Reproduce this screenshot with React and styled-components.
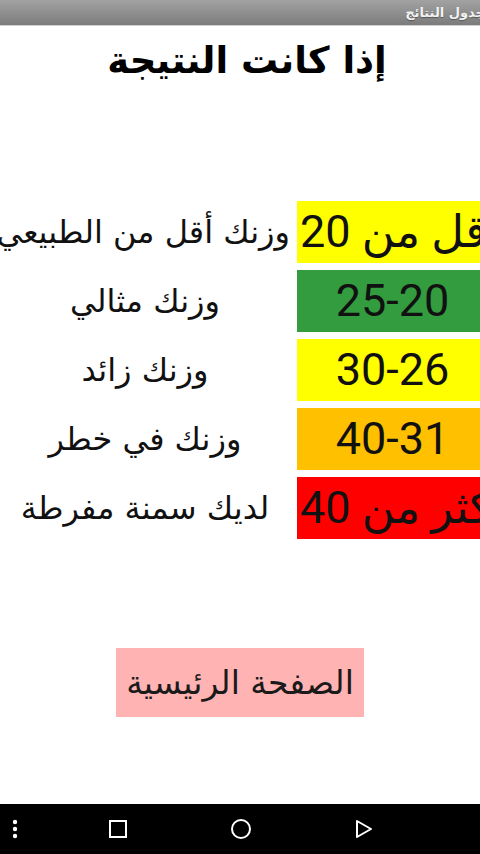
import React from 'react';
import styled, { createGlobalStyle } from 'styled-components';

const GlobalStyle = createGlobalStyle`
  html, body { margin: 0; padding: 0; background: #fff; overflow: hidden; }
  * { box-sizing: border-box; }
`;

const Screen = styled.div`
  width: 480px; height: 854px; display: flex; flex-direction: column;
  background: #fff; overflow: hidden;
  font-family: "DejaVu Sans", "Noto Sans", sans-serif; color: #111;
`;

const TitleBar = styled.div`
  height: 26px; flex-shrink: 0; display: flex; justify-content: flex-end; align-items: center;
  background: linear-gradient(#a2a2a2, #7c7c7c);
  border-bottom: 1px solid #cfcfcf; overflow: hidden;
`;
const TitleText = styled.span`
  direction: rtl; white-space: nowrap; margin-right: -5px;
  font-size: 13px; font-weight: bold; color: #f2f2f2;
  text-shadow: 0 1px 1px rgba(0,0,0,0.35);
`;

const Content = styled.main`
  flex: 1; display: flex; flex-direction: column; align-items: center;
`;

const Heading = styled.h1`
  margin: 10px 0 0 14px; direction: rtl;
  font-size: 37px; font-weight: bold; line-height: 50px; color: #000;
`;

const Table = styled.div`
  margin-top: 115px; width: 480px; display: flex; flex-direction: column; gap: 7px;
`;

const Row = styled.div`
  display: flex; direction: ltr; align-items: center; height: 62px;
`;

const Label = styled.div`
  width: 290px; flex-shrink: 0; direction: rtl; text-align: center; white-space: nowrap;
  font-size: 32px; line-height: 62px;
`;

const Range = styled.div`
  width: 188px; height: 62px; margin-left: 7px; flex-shrink: 0; overflow: hidden;
  direction: ltr; text-align: center; white-space: nowrap; padding-left: 3px;
  background: ${p => p.bg};
`;
const RangeText = styled.span`
  display: inline-block; direction: rtl; unicode-bidi: isolate;
  font-family: Roboto, "DejaVu Sans", sans-serif; font-size: 45px; line-height: 62px; color: #111;
`;

const HomeButton = styled.button`
  margin-top: 109px; width: 248px; height: 69px; border: none; border-radius: 0;
  background: #ffb3b3; direction: rtl; cursor: pointer;
  font-family: "DejaVu Sans", "Noto Sans", sans-serif; font-size: 33px; color: #1a1a1a;
`;

const NavBar = styled.nav`
  height: 50px; flex-shrink: 0; background: #000; display: flex; align-items: center;
`;
const NavSlot = styled.div`
  width: ${p => p.w}px; display: flex; justify-content: center; align-items: center;
`;

const rows = [
  { label: 'وزنك أقل من الطبيعي', range: 'أقل من 20', bg: '#ffff00' },
  { label: 'وزنك مثالي', range: '25-20', bg: '#329c3e' },
  { label: 'وزنك زائد', range: '30-26', bg: '#ffff00' },
  { label: 'وزنك في خطر', range: '40-31', bg: '#ffc000' },
  { label: 'لديك سمنة مفرطة', range: 'أكثر من 40', bg: '#ff0000' },
];

const App = () => (
  <>
    <GlobalStyle />
    <Screen>
      <TitleBar>
        <TitleText>جدول النتائج</TitleText>
      </TitleBar>

      <Content>
        <Heading>إذا كانت النتيجة</Heading>

        <Table>
          {rows.map(r => (
            <Row key={r.range}>
              <Label>{r.label}</Label>
              <Range bg={r.bg}><RangeText>{r.range}</RangeText></Range>
            </Row>
          ))}
        </Table>

        <HomeButton>الصفحة الرئيسية</HomeButton>
      </Content>

      <NavBar>
        <NavSlot w={30}>
          <svg width="6" height="20" viewBox="0 0 6 20" fill="#fff">
            <circle cx="3" cy="3" r="2.2" /><circle cx="3" cy="10" r="2.2" /><circle cx="3" cy="17" r="2.2" />
          </svg>
        </NavSlot>
        <NavSlot w={176}>
          <svg width="18" height="18" viewBox="0 0 18 18" fill="none" stroke="#fff" strokeWidth="2">
            <rect x="1" y="1" width="16" height="16" />
          </svg>
        </NavSlot>
        <NavSlot w={70}>
          <svg width="22" height="22" viewBox="0 0 22 22" fill="none" stroke="#fff" strokeWidth="2">
            <circle cx="11" cy="11" r="9" />
          </svg>
        </NavSlot>
        <NavSlot w={176}>
          <svg width="18" height="20" viewBox="0 0 18 20" fill="none" stroke="#fff" strokeWidth="2" strokeLinejoin="round">
            <path d="M2 2 L16 10 L2 18 Z" />
          </svg>
        </NavSlot>
      </NavBar>
    </Screen>
  </>
);

export default App;
